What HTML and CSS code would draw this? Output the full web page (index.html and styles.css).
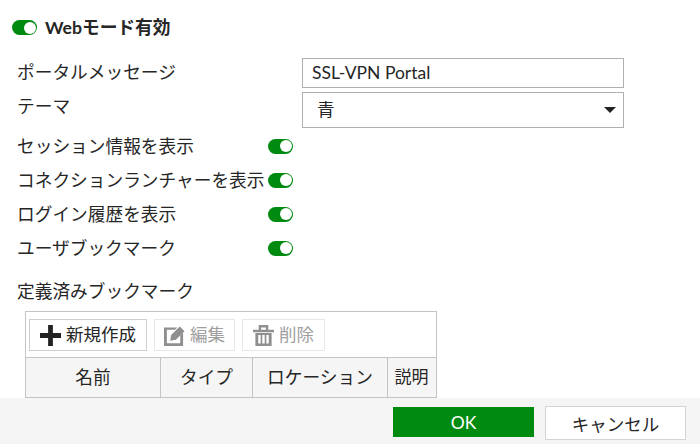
FILE: index.html
```html
<!DOCTYPE html>
<html lang="ja">
<head>
<meta charset="utf-8">
<title>Webモード</title>
<link rel="stylesheet" href="styles.css">
</head>
<body>
<main class="content">
  <div class="heading"><span class="toggle"></span><span>Webモード有効</span></div>
  <div class="field field-message">
    <label class="field-label">ポータルメッセージ</label>
    <div class="input"><span class="lift">SSL-VPN Portal</span></div>
  </div>
  <div class="field field-theme">
    <label class="field-label">テーマ</label>
    <div class="select"><span class="lift-more">青</span><span class="caret"></span></div>
  </div>
  <div class="switches">
    <div class="switch-row"><span class="switch-label">セッション情報を表示</span><span class="toggle"></span></div>
    <div class="switch-row"><span class="switch-label">コネクションランチャーを表示</span><span class="toggle"></span></div>
    <div class="switch-row"><span class="switch-label">ログイン履歴を表示</span><span class="toggle"></span></div>
    <div class="switch-row"><span class="switch-label">ユーザブックマーク</span><span class="toggle"></span></div>
  </div>
  <div class="section-label">定義済みブックマーク</div>
  <div class="table">
    <div class="toolbar">
      <button class="tool tool-new">
        <svg class="icon" viewBox="0 0 22 22"><path d="M8.500 0h5v8.500H22v5h-8.500V22h-5v-8.500H0v-5h8.500z" fill="#222"/></svg><span class="lift-more">新規作成</span>
      </button>
      <button class="tool tool-edit disabled">
        <svg class="icon" viewBox="0 0 22 22"><path d="M0 2.500h14l-2.500 2.500H3v14h14v-8l3-3V22H0z" fill="#8f8f8f"/><path d="M7.500 10.500 16.500 1.500 21.500 6.500 12.500 15.500 6.500 16.500z" fill="#8f8f8f"/></svg><span class="lift-more">編集</span>
      </button>
      <button class="tool tool-delete disabled">
        <svg class="icon" viewBox="0 0 22 22"><path d="M0 5h6V0h10v5h6v2.500H0zM8.500 2.500V5h5V2.500z" fill="#8f8f8f" fill-rule="evenodd"/><path d="M2.500 8.500h17V22h-17zM5.500 10.500v9h2.500v-9zM9.750 10.500v9h2.500v-9zM14 10.500v9h2.500v-9z" fill="#8f8f8f" fill-rule="evenodd"/></svg><span class="lift-more">削除</span>
      </button>
    </div>
    <div class="thead">
      <div class="th col-name">名前</div>
      <div class="th col-type">タイプ</div>
      <div class="th col-loc">ロケーション</div>
      <div class="th col-desc">説明</div>
    </div>
  </div>
</main>
<footer class="footer">
  <button class="btn btn-ok">OK</button>
  <button class="btn btn-cancel">キャンセル</button>
</footer>
</body>
</html>
```
FILE: styles.css
```css
* { box-sizing: border-box; }
html, body { margin: 0; height: 444px; overflow: hidden; }
body {
  width: 700px;
  display: flex;
  flex-direction: column;
  background: #fff;
  color: #262626;
  font-family: "Lato", "Noto Sans CJK JP", sans-serif;
  font-size: 17.7px;
}
.content { height: 398px; overflow: hidden; padding: 20px 0 0 12px; flex: none; }
.heading {
  display: flex; align-items: center; gap: 8px;
  height: 15px; font-weight: 700; font-size: 17.7px; line-height: 15px;
}
.toggle {
  display: block; flex: none; width: 25px; height: 15px; border-radius: 8px;
  background: #008a10; position: relative;
}
.toggle::after {
  content: ""; position: absolute; right: 1.5px; top: 1.5px;
  width: 12px; height: 12px; border-radius: 50%; background: #fff;
}
.lift { margin-bottom: 2px; }
.lift-more { margin-bottom: 4px; }
.field { display: flex; padding-left: 5px; }
.field-label { width: 285px; flex: none; line-height: 24px; }
.field-message { margin-top: 23px; height: 30px; }
.field-message .field-label { padding-top: 3px; }
.field-theme { margin-top: 4px; height: 36px; }
.field-theme .field-label { margin-top: 3px; }
.input, .select {
  width: 322px; border: 1.5px solid #b0b0b0; background: #fff;
  display: flex; align-items: center; font-size: 17.5px;
}
.input { height: 30px; padding-left: 9px; }
.select { height: 36px; padding: 0 7px 0 14px; justify-content: space-between; }
.caret {
  width: 0; height: 0;
  border-left: 6px solid transparent; border-right: 6px solid transparent; border-top: 6px solid #222;
}
.switches { margin-top: 1px; display: flex; flex-direction: column; padding-left: 5px; }
.switch-row { display: flex; align-items: center; height: 34px; }
.switch-label { width: 251px; flex: none; white-space: nowrap; margin-top: -2px; }
.section-label { margin: 14px 0 0 5px; height: 26px; line-height: 26px; }
.table {
  margin: 6px 0 0 13px; width: 412px;
  border: 1.5px solid #c4c4c4; border-bottom: 0;
}
.toolbar { height: 46px; padding-top: 7px; display: flex; gap: 7px; padding-left: 3px; border-bottom: 1.5px solid #c4c4c4; }
.tool {
  height: 32px; display: flex; align-items: center; justify-content: center; gap: 5px;
  background: #fff; border: 1.5px solid #cfcfcf; padding: 0;
  font: inherit; font-size: 17.5px; color: #262626;
}
.tool.disabled { border-color: #e8e8e8; color: #a0a0a0; }
.tool-new { width: 118px; }
.tool-edit { width: 81px; }
.tool-delete { width: 83px; }
.icon { width: 21px; height: 21px; flex: none; }
.thead { display: flex; height: 40px; background: #f5f5f5; border-bottom: 1.5px solid #c4c4c4; }
.th {
  display: flex; flex: none; align-items: center; justify-content: center; padding-bottom: 4px;
  border-right: 1.5px solid #c4c4c4; font-size: 17.7px;
}
.col-name { width: 135px; }
.col-type { width: 92px; }
.col-loc { width: 135px; }
.col-desc { width: 47px; border-right: 0; font-size: 17px; }
.footer {
  flex: 1; background: #f5f5f5; display: flex; align-items: flex-start; gap: 11px;
  padding: 8px 0 0 393px;
}
.btn { font: inherit; font-size: 17.5px; padding: 0; }
.btn-ok {
  width: 141px; height: 30px; margin-top: 1px; border: 0; background: #008a10; color: #fff;
}
.btn-cancel {
  width: 141px; height: 34px; border: 1.5px solid #d4d4d4; background: #fff; color: #262626;
}
```
